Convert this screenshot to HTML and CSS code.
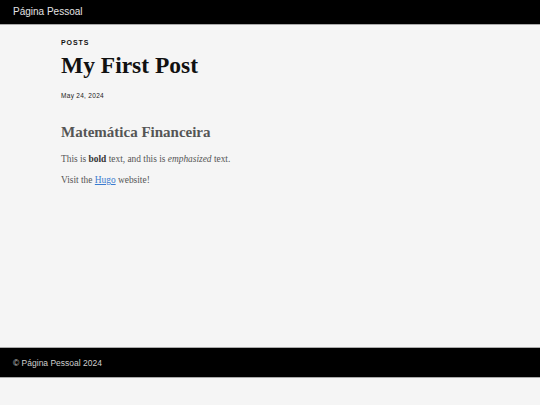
FILE: index.html
```html
<!DOCTYPE html>
<html lang="pt">
<head>
<meta charset="utf-8">
<title>My First Post | Página Pessoal</title>
<link rel="stylesheet" href="styles.css">
</head>
<body>
<header class="site-header">
  <a class="site-title" href="#">Página Pessoal</a>
</header>
<main class="content">
  <article class="post">
    <div class="section-label">POSTS</div>
    <h1 class="post-title">My First Post</h1>
    <time class="post-date">May 24, 2024</time>
    <h2 class="post-subtitle">Matemática Financeira</h2>
    <p class="post-text">This is <strong>bold</strong> text, and this is <em>emphasized</em> text.</p>
    <p class="post-text">Visit the <a class="link" href="#">Hugo</a> website!</p>
  </article>
</main>
<footer class="site-footer">
  <span class="footer-text">© Página Pessoal 2024</span>
</footer>
</body>
</html>
```
FILE: styles.css
```css
html, body {
  margin: 0;
  padding: 0;
  background: #f5f5f5;
}
body {
  font-family: "Liberation Sans", Arial, sans-serif;
  width: 540px;
  height: 405px;
  display: flex;
  flex-direction: column;
}
.site-header {
  background: #000;
  height: 24px;
  border-bottom: 1px solid #aaa;
  display: flex;
  align-items: center;
  padding-left: 13px;
}
.site-title {
  color: #e4e4e4;
  text-decoration: none;
  font-size: 10px;
  line-height: 1;
  margin-top: -1px;
}
.content {
  flex: 1;
  padding: 0 61px;
}
.post {
  display: flex;
  flex-direction: column;
  align-items: flex-start;
}
.section-label {
  margin-top: 14px;
  font-size: 7px;
  font-weight: bold;
  letter-spacing: 0.9px;
  color: #111;
  line-height: 8px;
}
.post-title {
  font-family: "Liberation Serif", Georgia, serif;
  font-size: 23.5px;
  font-weight: bold;
  color: #111;
  margin: 3px 0 0;
  line-height: 30px;
}
.post-date {
  font-size: 6.5px;
  color: #222;
  letter-spacing: 0.3px;
  margin-top: 12px;
  line-height: 8px;
}
.post-subtitle {
  font-family: "Liberation Serif", Georgia, serif;
  font-size: 15px;
  font-weight: bold;
  color: #555;
  margin: 23px 0 4px;
  line-height: 18px;
}
.post-text {
  font-family: "Liberation Serif", Georgia, serif;
  font-size: 9.4px;
  color: #555;
  margin: 8px 0 0;
  line-height: 13px;
}
.post-text strong { color: #333; }
.link { color: #3b7bd0; }
.site-footer {
  background: #000;
  height: 29px;
  border-top: 1px solid #aaa;
  border-bottom: 1px solid #aaa;
  margin-bottom: 27px;
  display: flex;
  align-items: center;
  padding-left: 13px;
}
.footer-text {
  color: #cfcfcf;
  font-size: 8.5px;
}
```
